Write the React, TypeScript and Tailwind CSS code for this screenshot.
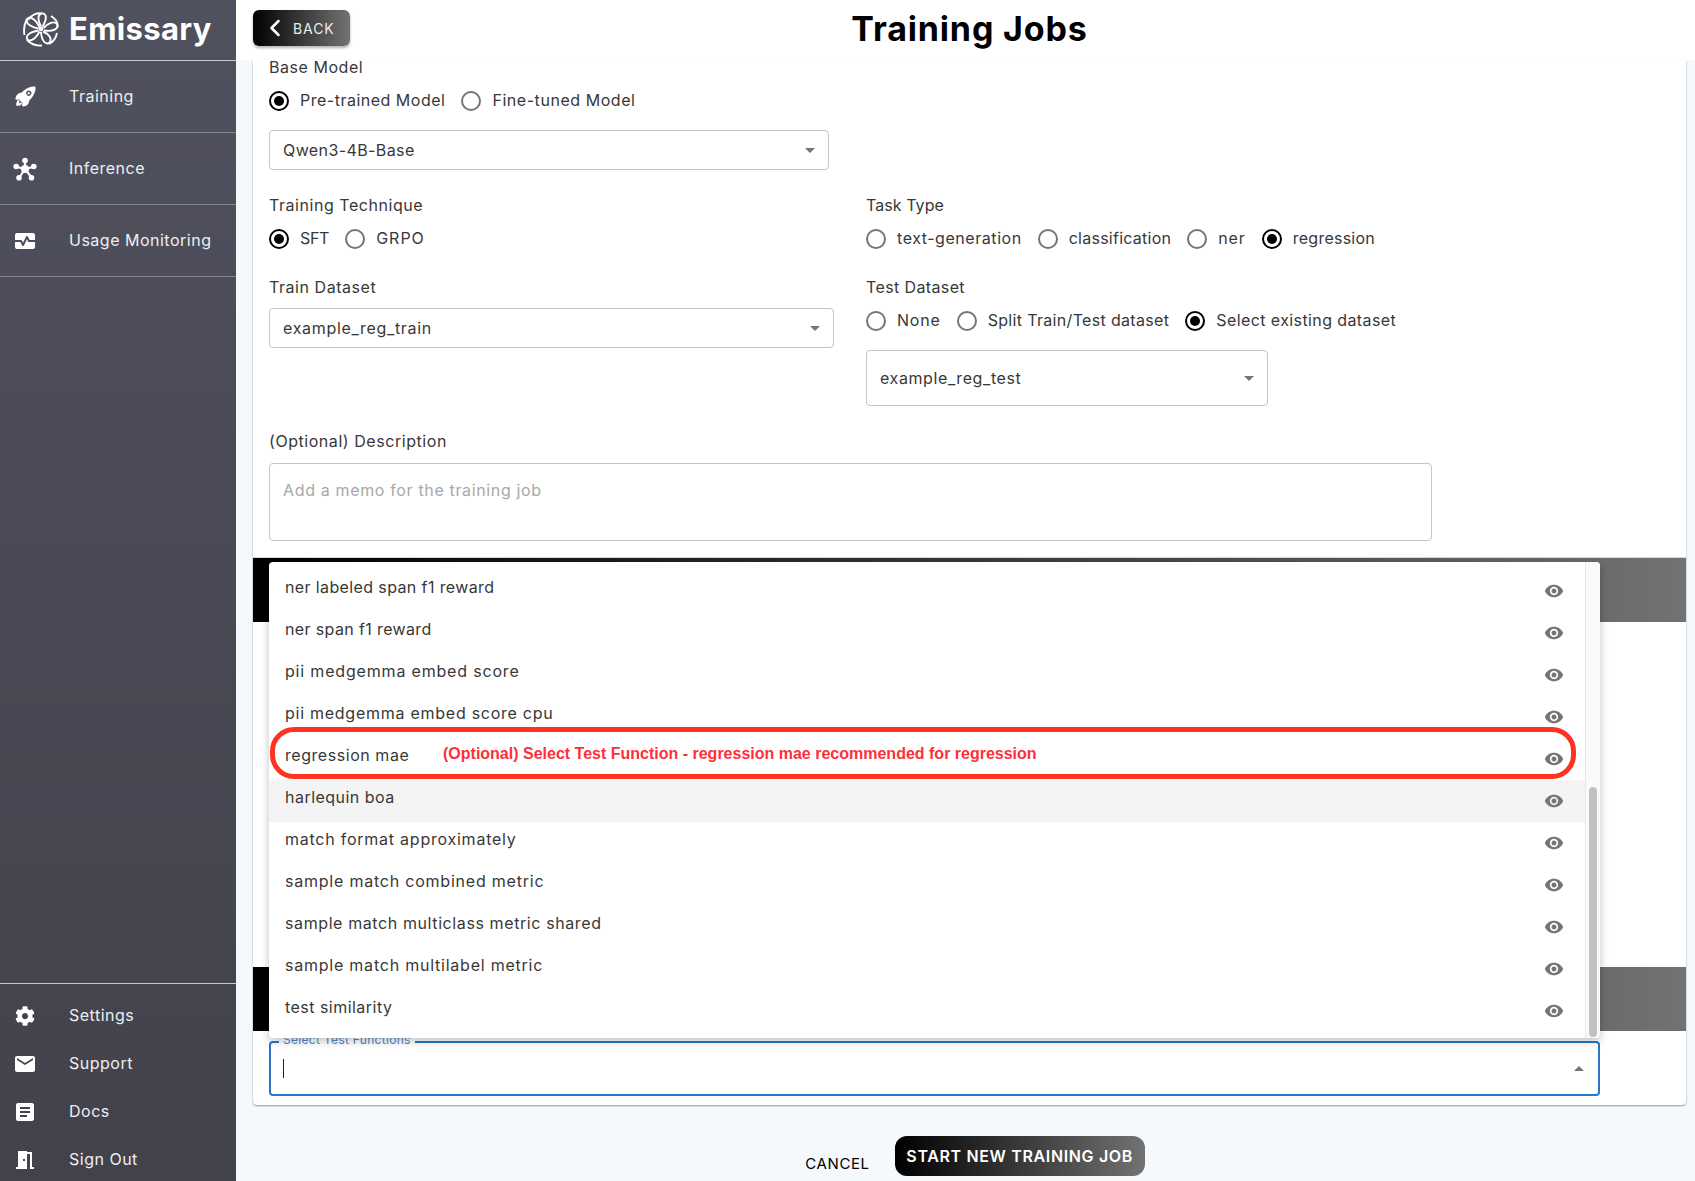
import { ChevronLeft } from 'lucide-react';
import type { ReactNode } from 'react';
import { FaCog } from 'react-icons/fa';
import { IoRocket } from 'react-icons/io5';
import { MdArticle, MdEmail, MdMeetingRoom, MdMonitorHeart, MdVisibility } from 'react-icons/md';

const gradient = 'bg-linear-to-r/srgb from-black to-[#727272]';

function EmissaryLogo() {
  return (
    <svg width="38" height="36" viewBox="0 0 38 36" fill="none" stroke="white" strokeWidth="1.9">
      <circle cx="19" cy="18" r="2.4" fill="white" stroke="none" />
      <path d="M19 15.5C16 10 15 4 19.500 2.500C24 1.500 26 7 20.500 15.500" />
      <path d="M21.500 17C26 12 32 9.500 35 13C37.500 17 32 21 22 19.500" />
      <path d="M21 20.500C27 23 30.500 28 27.500 31.500C24 34.500 19.500 30 19 21" />
      <path d="M17.500 20.500C15 26 10 31 6 29C2.500 26 6.500 21 16.500 19.500" />
      <path d="M16.500 17.500C10.500 16.500 4.500 13.500 4.500 9C6 4.500 12.500 6 17.500 16" />
      <path d="M6 9C10 3 16 1.500 19.500 2.500M29 5C34 8 36 12 35.500 16M35 22C34 27 31 31 27 33M20 34.500C14 35 9 33 5 29M2.500 24C1.500 19 2.500 13 4.500 9" />
    </svg>
  );
}

function InferenceIcon() {
  return (
    <svg width="24" height="24" viewBox="0 0 24 24" fill="white" stroke="white">
      <path d="M12 3.500L12 12M4 10L12 12M20 10L12 12M6 21L12 12M19 21L12 12" strokeWidth="2.2" />
      <circle cx="12" cy="12" r="4" stroke="none" />
      <circle cx="12" cy="3.500" r="2.800" stroke="none" />
      <circle cx="3.200" cy="9.500" r="2.800" stroke="none" />
      <circle cx="20.800" cy="9.500" r="2.800" stroke="none" />
      <circle cx="6" cy="20.800" r="2.800" stroke="none" />
      <circle cx="18.500" cy="20.800" r="2.800" stroke="none" />
    </svg>
  );
}

function NavRow({ icon, label }: { icon: ReactNode; label: string }) {
  return (
    <div className="flex h-[72px] shrink-0 items-center border-b border-[#85858c]">
      <div className="flex w-[50px] justify-center">{icon}</div>
      <span className="ml-[19px] pb-[2px] text-[16px] tracking-[0.5px] text-[#eeeef0]">{label}</span>
    </div>
  );
}

function FooterRow({ icon, label }: { icon: ReactNode; label: string }) {
  return (
    <div className="flex h-[48px] shrink-0 items-center">
      <div className="flex w-[50px] justify-center">{icon}</div>
      <span className="ml-[19px] pb-[2px] text-[16px] tracking-[0.5px] text-[#eeeef0]">{label}</span>
    </div>
  );
}

function Sidebar() {
  return (
    <aside className="flex h-[1181px] w-[236px] shrink-0 flex-col overflow-hidden bg-gradient-to-b from-[#50515e] to-[#41424b]">
      <div className="flex h-[61px] shrink-0 items-center gap-[9px] border-b border-[#c9c9cc] pb-[3px] pl-[22px]">
        <EmissaryLogo />
        <span className="text-[31px] leading-none font-bold tracking-[0.35px] text-white">Emissary</span>
      </div>
      <NavRow icon={<IoRocket size={23} color="white" />} label="Training" />
      <NavRow icon={<InferenceIcon />} label="Inference" />
      <NavRow icon={<MdMonitorHeart size={24} color="white" />} label="Usage Monitoring" />
      <div className="h-[706px] shrink-0" />
      <div className="shrink-0 border-t border-[#c9c9cc] pt-[8px]">
        <FooterRow icon={<FaCog size={20} color="white" />} label="Settings" />
        <FooterRow icon={<MdEmail size={24} color="white" />} label="Support" />
        <FooterRow icon={<MdArticle size={24} color="white" />} label="Docs" />
        <FooterRow icon={<MdMeetingRoom size={24} color="white" />} label="Sign Out" />
      </div>
    </aside>
  );
}

function Radio({
  label,
  checked = false,
  track = 'tracking-[0.55px]',
}: {
  label: string;
  checked?: boolean;
  track?: string;
}) {
  return (
    <label className="flex items-center gap-[11px]">
      <span
        className={`flex size-[20px] items-center justify-center rounded-full border-2 ${checked ? 'border-black' : 'border-[#757575]'}`}
      >
        {checked && <span className="size-[10px] rounded-full bg-black" />}
      </span>
      <span className={`pb-[2px] ${track}`}>{label}</span>
    </label>
  );
}

function Arrow({ up = false }: { up?: boolean }) {
  return (
    <span
      className={`size-0 border-x-[5px] border-x-transparent ${up ? 'border-b-[5px] border-b-[#757575]' : 'border-t-[5px] border-t-[#757575]'}`}
    />
  );
}

function SelectBox({ value, className, track }: { value: string; className: string; track: string }) {
  return (
    <div className={`flex items-center justify-between rounded border border-[#c4c4c4] pr-[13px] pl-[13px] ${className}`}>
      <span className={track}>{value}</span>
      <Arrow />
    </div>
  );
}

const options = [
  { name: 'ner labeled span f1 reward', track: 'tracking-[0.38px]' },
  { name: 'ner span f1 reward', track: 'tracking-[0.37px]' },
  { name: 'pii medgemma embed score', track: 'tracking-[0.82px]' },
  { name: 'pii medgemma embed score cpu', track: 'tracking-[0.74px]' },
  { name: 'regression mae', track: 'tracking-[0.55px]' },
  { name: 'harlequin boa', track: 'tracking-[0.47px]' },
  { name: 'match format approximately', track: 'tracking-[0.76px]' },
  { name: 'sample match combined metric', track: 'tracking-[0.78px]' },
  { name: 'sample match multiclass metric shared', track: 'tracking-[0.6px]' },
  { name: 'sample match multilabel metric', track: 'tracking-[0.77px]' },
  { name: 'test similarity', track: 'tracking-[0.47px]' },
];

function OptionsPopup() {
  return (
    <div className="absolute top-[502px] left-[16px] z-10 h-[476px] w-[1331px] rounded bg-white shadow-[0_3px_8px_rgba(0,0,0,0.25)]">
      <div className="flex h-full">
        <ul className="flex-1 pt-[8px]">
          {options.map(({ name, track }) => (
            <li
              key={name}
              className={`flex h-[42px] items-center justify-between pr-[21px] pl-[16px] ${name === 'harlequin boa' ? 'bg-[#f4f4f4]' : ''}`}
            >
              <span className={`pb-[8px] ${track}`}>{name}</span>
              <MdVisibility size={20} color="#757575" />
            </li>
          ))}
        </ul>
        <div className="w-[15px] rounded-r border-l border-[#e8e8e8] bg-[#fafafa] pt-[225px] pl-[3px]">
          <div className="h-[250px] w-[8px] rounded bg-[#c1c1c1]" />
        </div>
      </div>
      {/* annotation drawn on the screenshot */}
      <div className="absolute top-[165px] left-[1px] h-[52px] w-[1306px] rounded-[24px] border-[5px] border-[#ff3322]" />
      <div className="absolute top-[180px] left-[174px] h-[24px] font-['Liberation_Sans',sans-serif] text-[16px] leading-[24px] font-bold whitespace-nowrap text-[#ff2f3a]">
        (Optional) Select Test Function - regression mae recommended for regression
      </div>
    </div>
  );
}

function TrainingForm() {
  return (
    <section className="relative h-[1045px] rounded-b bg-white shadow-[0_1px_2px_rgba(0,0,0,0.4)]">
      <div className="px-[16px]">
        <div className="h-[14px] leading-[14px] tracking-[0.55px]">Base Model</div>
        <div className="mt-[15px] flex h-[24px] items-center gap-[16px]">
          <Radio label="Pre-trained Model" track="tracking-[0.5px]" checked />
          <Radio label="Fine-tuned Model" />
        </div>
        <SelectBox value="Qwen3-4B-Base" track="tracking-[0.4px]" className="mt-[17px] h-[40px] w-[560px]" />

        <div className="mt-[23px] grid grid-cols-[564px_1fr] gap-x-[33px]">
          <div>
            <div className="h-[24px] tracking-[0.55px]">Training Technique</div>
            <div className="mt-[10px] flex h-[24px] items-center gap-[16px]">
              <Radio label="SFT" track="tracking-[-0.3px]" checked />
              <Radio label="GRPO" track="tracking-[1px]" />
            </div>
          </div>
          <div>
            <div className="h-[24px] tracking-[0.07px]">Task Type</div>
            <div className="mt-[10px] flex h-[24px] items-center gap-[16px]">
              <Radio label="text-generation" />
              <Radio label="classification" track="tracking-[0.25px]" />
              <Radio label="ner" track="tracking-[0.9px]" />
              <Radio label="regression" track="tracking-[0.25px]" checked />
            </div>
          </div>
          <div className="mt-[24px]">
            <div className="h-[24px] tracking-[0.55px]">Train Dataset</div>
            <SelectBox value="example_reg_train" track="tracking-[0.68px]" className="mt-[9px] h-[40px] w-[565px]" />
          </div>
          <div className="mt-[24px]">
            <div className="h-[24px] tracking-[0.38px]">Test Dataset</div>
            <div className="mt-[10px] flex h-[24px] items-center gap-[16px]">
              <Radio label="None" track="tracking-[0.8px]" />
              <Radio label="Split Train/Test dataset" track="tracking-[0.33px]" />
              <Radio label="Select existing dataset" track="tracking-[0.4px]" checked />
            </div>
            <SelectBox value="example_reg_test" track="tracking-[0.6px]" className="mt-[17px] h-[56px] w-[402px]" />
          </div>
        </div>

        <div className="mt-[23px] h-[24px] tracking-[0.55px]">(Optional) Description</div>
        <div className="mt-[10px] h-[78px] w-[1163px] rounded border border-[#c4c4c4] px-[13px] pt-[14px] tracking-[0.65px] text-[#a8a8a8]">
          Add a memo for the training job
        </div>
      </div>

      <div className={`mt-[16px] h-[65px] border-t border-[#d8d8d8] ${gradient}`} />
      <div className="h-[345px]" />
      <div className={`h-[64px] ${gradient}`} />

      <div className="relative mx-[16px] mt-[10px] flex h-[55px] w-[1331px] items-center justify-between rounded border-2 border-[#2a76c8] pr-[14px] pl-[12px]">
        <span className="absolute -top-[11px] left-[8px] bg-white px-[4px] text-[12px] leading-[16px] tracking-[0.3px] whitespace-nowrap text-[#4a8ad2]">
          Select Test Functions
        </span>
        <span className="h-[19px] w-px bg-[#222]" />
        <Arrow up />
      </div>

      <OptionsPopup />
    </section>
  );
}

export default function App() {
  return (
    <div className="flex h-[1181px] overflow-hidden bg-[#f5f9fc] font-['Inter',sans-serif] text-[16px] text-[#383838]">
      <Sidebar />
      <main className="min-w-0 flex-1">
        <header className="grid h-[60px] grid-cols-[1fr_auto_1fr] bg-white pr-[9px] pl-[17px]">
          <button
            className={`mt-[10px] flex h-[36px] w-[97px] items-center rounded-md pl-[8px] text-[14px] text-[#ececec] shadow-[0_2px_3px_rgba(0,0,0,0.3)] ${gradient}`}
          >
            <ChevronLeft size={28} strokeWidth={2.2} color="white" />
            <span className="ml-[4px] tracking-[0.9px]">BACK</span>
          </button>
          <h1 className="self-center pb-[3px] text-[34px] font-bold tracking-[0.85px] text-black">Training Jobs</h1>
        </header>
        <div className="pr-[9px] pl-[17px]">
          <TrainingForm />
          <div className="mt-[31px] flex justify-center pl-[11px]">
            <button className="mr-[25px] self-end pb-[1px] text-[15px] tracking-[0.6px] text-black">CANCEL</button>
            <button
              className={`h-[40px] w-[250px] rounded-xl pb-[1px] text-[16px] font-semibold tracking-[0.65px] text-white ${gradient}`}
            >
              START NEW TRAINING JOB
            </button>
          </div>
        </div>
      </main>
    </div>
  );
}
